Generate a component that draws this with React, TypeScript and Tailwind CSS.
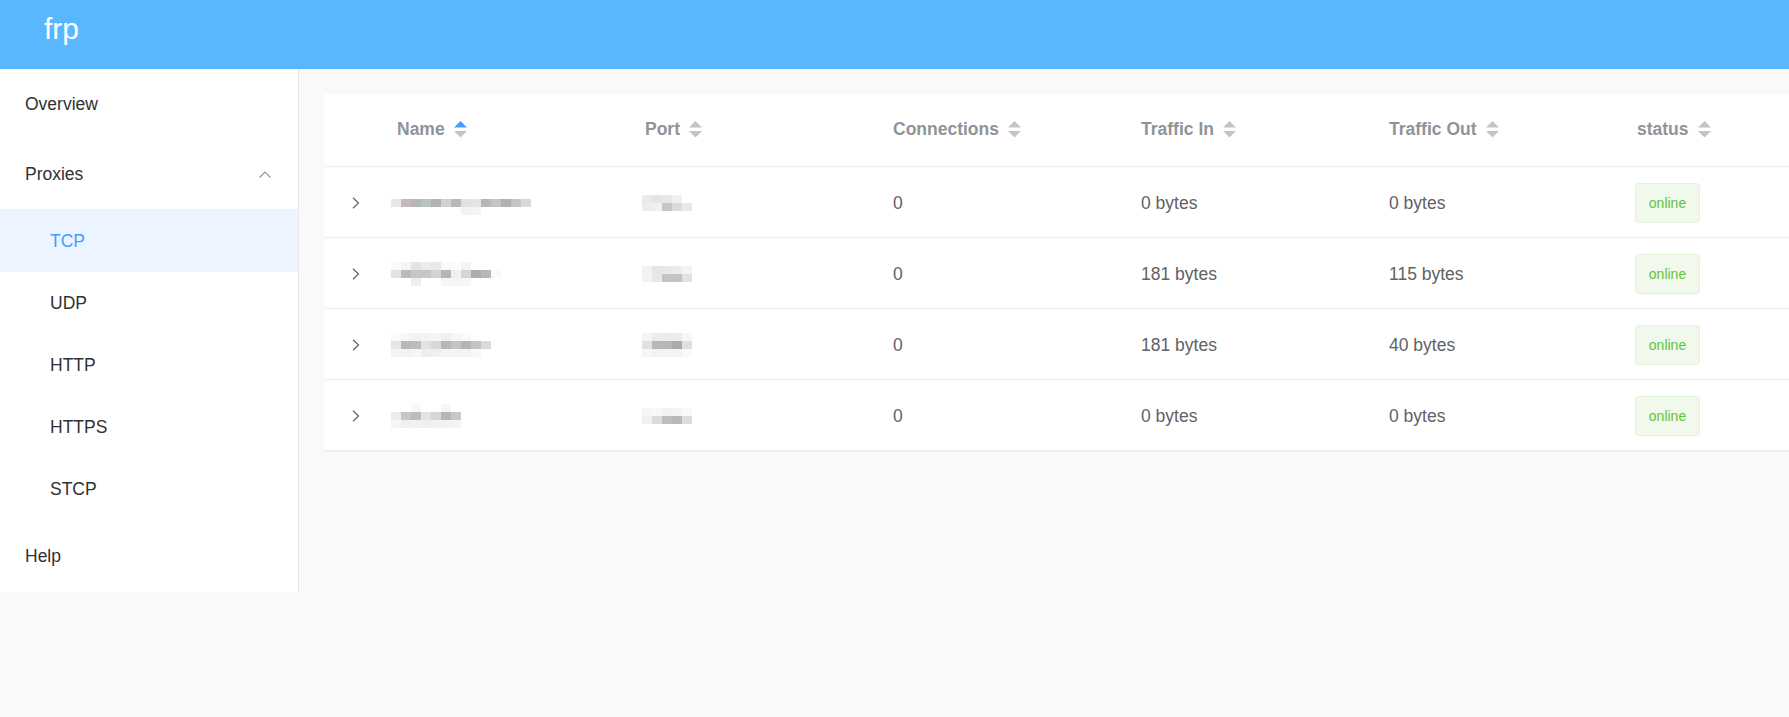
import React from 'react';

type Proxy = {
  name: string[][];
  port: string[][];
  conns: number;
  trafficIn: string;
  trafficOut: string;
  status: string;
};

// pixelated (anonymised) cells: each inner array is one row of 10px blocks
const PROXIES: Proxy[] = [
  {
    name: [
      [],
      ['#e8e8e8', '#c2bab6', '#b5b5bb', '#b9c3c0', '#b2b2b2', '#d3d1cf', '#b7b7bd', '#e1e1e5', '#e7e5e3', '#b7b7b7', '#c1c5c5', '#b1b1b3', '#c5c5c5', '#d7d9dd'],
      ['', '', '', '', '', '', '', '#f2f2f4', '#f4f4f4'],
    ],
    port: [
      ['#eaeaea', '#e4e4e4', '#e8e8e8', '#f0f0f2'],
      ['#ededed', '#eef0f2', '#c6c6c6', '#dcdad8', '#e6e8ee'],
    ],
    conns: 0,
    trafficIn: '0 bytes',
    trafficOut: '0 bytes',
    status: 'online',
  },
  {
    name: [
      ['#fafafa', '#f4f4f6', '#e4e4e4', '#ececee', '#e8e8ea', '#fafafa', '#fbfbfb', '#f4f4f4'],
      ['#e4e4e4', '#c0b8b4', '#c4c6ce', '#c8c6c4', '#d4d4d6', '#b6b4b8', '#f0f0f2', '#d8d4d2', '#aeacb2', '#b8b8bc', '#f8f9fc'],
      ['', '', '#eeeeee', '', '', '#f6f6f6', '#f4f4f4', '#f6f6f6'],
    ],
    port: [
      ['#f2f2f2', '#e6e6e6', '#e8e8e8', '#ececec', '#f4f4f4'],
      ['#f6f4f2', '#e6e8ea', '#c4c4c4', '#c4c4c4', '#e2e2e2'],
    ],
    conns: 0,
    trafficIn: '181 bytes',
    trafficOut: '115 bytes',
    status: 'online',
  },
  {
    name: [
      ['#fafafa', '#f6f6f6', '#f2f2f2', '#f4f4f4', '#f6f6f6', '#f0f0f0', '#f6f6f6', '#fafafa'],
      ['#e6e6e6', '#b8b8b8', '#bcbcbc', '#e0e2e4', '#d8d8d8', '#b6b6b6', '#c4c4c4', '#afb6b8', '#c4c4c6', '#d8dadc'],
      ['#f4f4f4', '#f2f2f2', '#f4f6f8', '#eeeeee', '#efefef', '#f4f4f4', '#f6f6f6', '#f4f4f4', '#f8f8f8'],
    ],
    port: [
      ['#f4f4f4', '#ececec', '#ebebeb', '#ececec', '#f6f6f6'],
      ['#e0e0e0', '#b8b8b8', '#b6b6b6', '#ababab', '#e0e0e0'],
      ['#f6f6f6', '#f2f2f2', '#f4f4f4', '#f4f4f4', '#fafafa'],
    ],
    conns: 0,
    trafficIn: '181 bytes',
    trafficOut: '40 bytes',
    status: 'online',
  },
  {
    name: [
      ['', '', '#f8f8f8', '', '', '#f6f6f6'],
      ['#ececec', '#c6c6c8', '#babcbe', '#e2e4e6', '#d8d6d4', '#b6b6ba', '#c8c8ca'],
      ['#f6f6f6', '#f0f0f0', '#f0f2f4', '#efefef', '#f2f2f2', '#f2f2f4', '#f4f4f4'],
    ],
    port: [
      ['#f8f6f4', '#f8f8f8', '#f2f2f2', '#f4f4f4', '#f8f8f8'],
      ['#f4f0ee', '#dcdcde', '#bebec0', '#b8b8ba', '#dcdcde'],
    ],
    conns: 0,
    trafficIn: '0 bytes',
    trafficOut: '0 bytes',
    status: 'online',
  },
];

const COLUMNS = ['Name', 'Port', 'Connections', 'Traffic In', 'Traffic Out', 'status'];

const SortIcon: React.FC<{ active?: boolean }> = ({ active }) => (
  <svg width="13" height="17" viewBox="0 0 13 17" className="ml-[9px] shrink-0">
    <polygon points="6.5,0 13,6.5 0,6.5" fill={active ? '#409eff' : '#c0c4cc'} />
    <polygon points="0,10 13,10 6.5,16.5" fill="#c0c4cc" />
  </svg>
);

const Pixelated: React.FC<{ rows: string[][] }> = ({ rows }) => (
  <div className="flex flex-col">
    {rows.map((row, i) => (
      <div key={i} className="flex h-[8px]">
        {row.map((c, j) => (
          <div key={j} className="w-[10px] h-[8px]" style={{ backgroundColor: c || 'transparent' }} />
        ))}
      </div>
    ))}
  </div>
);

const MenuItem: React.FC<{ label: string; sub?: boolean; active?: boolean; h: string }> = ({ label, sub, active, h }) => (
  <div
    className={`flex items-center ${h} ${sub ? 'pl-[50px]' : 'pl-[25px]'} ${
      active ? 'bg-[#ecf5ff] text-[#409eff]' : 'text-[#303133]'
    }`}
  >
    {label}
  </div>
);

export default function App() {
  return (
    <div className="h-screen overflow-hidden bg-[#f9f9f9] font-['Liberation_Sans',Arial,sans-serif]">
      {/* Header */}
      <header className="h-[69px] bg-[#58b7ff] pl-[44px] pt-[14px] text-white text-[30px] leading-none">frp</header>

      <div className="flex items-start">
        {/* Sidebar */}
        <aside className="w-[299px] shrink-0 bg-white border-r border-[#e6e6e6] text-[17.5px]">
          <MenuItem label="Overview" h="h-[70px] pt-[1px]" />
          <div className="flex items-center justify-between h-[70px] pt-[1px] pl-[25px] pr-[27px] text-[#303133]">
            <span>Proxies</span>
            <svg width="12" height="7" viewBox="0 0 12 7" fill="none">
              <path d="M0.5 6.5 L6 1 L11.5 6.5" stroke="#909399" strokeWidth="1.1" />
            </svg>
          </div>
          <MenuItem label="TCP" sub active h="h-[63px] pt-[1px]" />
          <MenuItem label="UDP" sub h="h-[62px] pt-[1px]" />
          <MenuItem label="HTTP" sub h="h-[62px] pt-[1px]" />
          <MenuItem label="HTTPS" sub h="h-[62px] pt-[1px]" />
          <MenuItem label="STCP" sub h="h-[62px] pt-[1px]" />
          <MenuItem label="Help" h="h-[72px] pt-[1px]" />
        </aside>

        {/* Main */}
        <main className="flex-1 min-w-0 overflow-hidden pt-[25px] pl-[25px]">
          <div className="w-[1537px] bg-white border-b border-[#ebeef5]">
            <div className="grid grid-cols-[49px_repeat(6,248px)] h-[73px] pb-[1px] border-b border-[#ebeef5] items-center">
              <div />
              {COLUMNS.map((c, i) => (
                <div key={c} className="flex items-center pl-[24px] text-[17.5px] font-bold text-[#909399]">
                  <span>{c}</span>
                  <SortIcon active={i === 0} />
                </div>
              ))}
            </div>

            {PROXIES.map((p, i) => (
              <div
                key={i}
                className="grid grid-cols-[49px_repeat(6,248px)] h-[71px] pt-[2px] border-b border-[#ebeef5] items-center text-[17.5px] text-[#606266]"
              >
                <div className="pl-[28px] flex items-center">
                  <svg width="8" height="12" viewBox="0 0 8 12" fill="none">
                    <path d="M1 0.8 L6.5 6 L1 11.2" stroke="#606266" strokeWidth="1.2" />
                  </svg>
                </div>
                <div className="pl-[18px] flex items-center">
                  <Pixelated rows={p.name} />
                </div>
                <div className="pl-[21px] flex items-center">
                  <Pixelated rows={p.port} />
                </div>
                <div className="pl-[24px]">{p.conns}</div>
                <div className="pl-[24px]">{p.trafficIn}</div>
                <div className="pl-[24px]">{p.trafficOut}</div>
                <div className="pl-[22px] flex items-center">
                  <span className="inline-flex items-center justify-center w-[65px] h-[40px] rounded-[4px] border border-[#e1f3d8] bg-[#f0f9eb] text-[#67c23a] text-[14px]">
                    {p.status}
                  </span>
                </div>
              </div>
            ))}
          </div>
        </main>
      </div>
    </div>
  );
}
